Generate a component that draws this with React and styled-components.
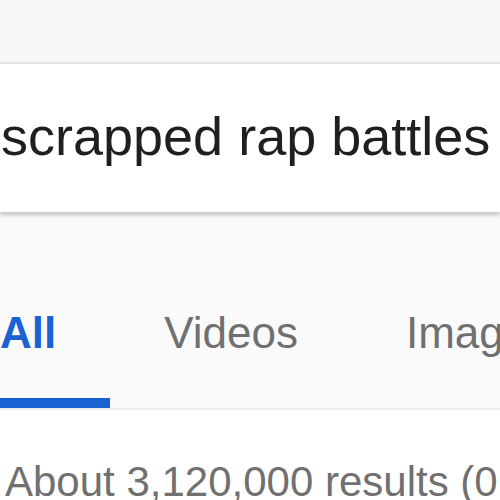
import React from "react";
import styled, { createGlobalStyle } from "styled-components";

const Global = createGlobalStyle`
  html, body { margin: 0; padding: 0; }
  body { width: 500px; height: 500px; overflow: hidden; background: #f7f7f7; font-family: "Liberation Sans", Arial, sans-serif; }
`;

const Page = styled.div`
  width: 500px;
  height: 500px;
  overflow: hidden;
  display: flex;
  flex-direction: column;
  background: #f7f7f7;
`;

const TopBar = styled.div`
  height: 62px;
  flex: none;
  background: #f7f7f7;
`;

const SearchBox = styled.div`
  flex: none;
  box-sizing: border-box;
  height: 150px;
  border-top: 2px solid #e4e4e4;
  background: #fff;
  box-shadow: 0 3px 4px rgba(0, 0, 0, 0.22);
  padding: 45px 0 0 1px;
  position: relative;
  z-index: 1;
`;

const Query = styled.div`
  font-size: 54px;
  line-height: 54px;
  color: #1f1f1f;
  white-space: nowrap;
`;

const TabsArea = styled.div`
  flex: none;
  background: #fafafa;
  padding-top: 99px;
  border-bottom: 2px solid #ebebeb;
`;

const TabRow = styled.div`
  display: flex;
  margin-left: -54px;
  white-space: nowrap;
`;

const Tab = styled.div`
  position: relative;
  padding: 0 54px 53px;
  font-size: 44px;
  line-height: 44px;
  font-weight: ${(p) => (p.$active ? 700 : 400)};
  color: ${(p) => (p.$active ? "#1a62d2" : "#707070")};
  &::after {
    content: "";
    display: ${(p) => (p.$active ? "block" : "none")};
    position: absolute;
    left: 0;
    right: 0;
    bottom: 0;
    height: 10px;
    background: #1a62d2;
  }
`;

const Results = styled.div`
  flex: 1;
  background: #fff;
  padding: 51px 0 0 5px;
`;

const Stats = styled.div`
  font-size: 42px;
  line-height: 42px;
  color: #707070;
  white-space: nowrap;
`;

export default function App() {
  return (
    <>
      <Global />
      <Page>
        <TopBar />
        <SearchBox>
          <Query>scrapped rap battles</Query>
        </SearchBox>
        <TabsArea>
          <TabRow>
            <Tab $active>All</Tab>
            <Tab>Videos</Tab>
            <Tab>Images</Tab>
          </TabRow>
        </TabsArea>
        <Results>
          <Stats>About 3,120,000 results (0.45 seconds)</Stats>
        </Results>
      </Page>
    </>
  );
}
